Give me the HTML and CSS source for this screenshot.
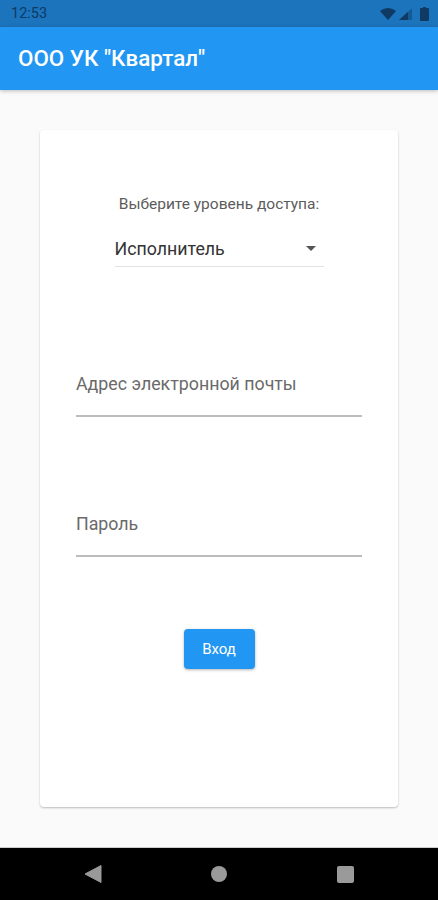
FILE: index.html
```html
<!DOCTYPE html>
<html lang="ru">
<head>
    <title>ООО УК "Квартал"</title>
    <link rel="stylesheet" href="styles.css">
</head>
<body>

    <div class="status-bar">
        <div class="clock">12:53</div>
        <div class="status-icons">
            <svg width="16" height="12" viewBox="0 0 16 12"><path d="M0 3 Q8 -3 16 3 L8 12 Z" fill="#0e3a63"/></svg>
            <svg class="signal" width="13" height="12" viewBox="0 0 13 12"><path d="M13 0 V12 H0 Z" fill="#0e3a63" opacity="0.45"/><path d="M9 4 V12 H0 Z" fill="#0e3a63"/></svg>
            <svg class="battery" width="9" height="14" viewBox="0 0 9 14"><path d="M3 0 H6 V1 H8 Q9 1 9 2 V13 Q9 14 8 14 H1 Q0 14 0 13 V2 Q0 1 1 1 H3 Z" fill="#0e3a63"/></svg>
        </div>
    </div>

    <div class="app-bar">ООО УК "Квартал"</div>

    <div class="content">
        <div class="card">
            <div class="access-label">Выберите уровень доступа:</div>
            <div class="dropdown">
                <span>Исполнитель</span>
                <div class="dropdown-arrow"></div>
            </div>
            <div class="field first-field">Адрес электронной почты</div>
            <div class="field">Пароль</div>
            <button class="login-btn">Вход</button>
        </div>
    </div>

    <div class="nav-bar">
        <svg width="18" height="20" viewBox="0 0 18 20"><path d="M17 1.5 V18.5 L1 10 Z" fill="#9a9a9a" stroke="#9a9a9a" stroke-linejoin="round"/></svg>
        <div class="nav-home"></div>
        <div class="nav-recent"></div>
    </div>

</body>
</html>
```

FILE: styles.css
```css
html, body {
    height: 100%;
}
body {
    font-family: Roboto, "Noto Sans", sans-serif;
    margin: 0;
    background-color: #fafafa;
    display: flex;
    flex-direction: column;
    height: 900px;
    overflow: hidden;
}
.status-bar {
    height: 27px;
    background-color: #1c74bd;
    display: flex;
    justify-content: space-between;
    align-items: center;
    padding: 0 9px 0 11px;
    flex-shrink: 0;
}
.clock {
    font-size: 14.5px;
    color: #0e3a63;
}
.status-icons {
    display: flex;
    align-items: center;
    gap: 3px;
}
.status-icons svg {
    display: block;
}
.status-icons .battery {
    margin-left: 5px;
}
.app-bar {
    height: 63px;
    background-color: #2196f3;
    color: white;
    font-size: 22.4px;
    font-weight: 500;
    line-height: 63px;
    padding-left: 18px;
    flex-shrink: 0;
    box-shadow: 0 1px 4px rgba(0, 0, 0, 0.25);
    position: relative;
}
.content {
    flex: 1;
    padding: 40px;
    display: flex;
}
.card {
    flex: 1;
    background-color: white;
    border-radius: 4px;
    box-shadow: 0 1px 2px rgba(0, 0, 0, 0.25);
    display: flex;
    flex-direction: column;
    align-items: center;
    padding: 0 36px;
}
.access-label {
    font-size: 15.5px;
    color: #5c5c5c;
    margin-top: 66px;
    line-height: 17px;
}
.dropdown {
    width: 209px;
    height: 36px;
    margin-top: 18px;
    box-sizing: border-box;
    border-bottom: 1px solid #e2e2e2;
    display: flex;
    justify-content: space-between;
    align-items: center;
    padding-right: 8px;
    font-size: 17.8px;
    color: #333;
}
.dropdown-arrow {
    width: 0;
    height: 0;
    border-left: 5px solid transparent;
    border-right: 5px solid transparent;
    border-top: 5px solid #555;
}
.field {
    align-self: stretch;
    height: 48px;
    box-sizing: border-box;
    border-bottom: 2px solid #bdbdbd;
    margin-top: 92px;
    font-size: 17.8px;
    color: #6a6a6a;
    line-height: 30px;
}
.first-field {
    margin-top: 102px;
}
.login-btn {
    width: 71px;
    height: 40px;
    margin-top: 72px;
    border: none;
    border-radius: 4px;
    background-color: #2196f3;
    color: white;
    font-family: inherit;
    font-size: 15px;
    box-shadow: 0 1px 3px rgba(0, 0, 0, 0.3);
}
.nav-bar {
    height: 52px;
    background-color: black;
    border-top: 1px solid #ccc;
    display: grid;
    grid-template-columns: repeat(3, 126px);
    justify-content: center;
    justify-items: center;
    align-items: center;
    flex-shrink: 0;
}
.nav-home {
    width: 16px;
    height: 16px;
    border-radius: 50%;
    background-color: #9a9a9a;
}
.nav-recent {
    width: 17px;
    height: 17px;
    border-radius: 2px;
    background-color: #9a9a9a;
}
```
